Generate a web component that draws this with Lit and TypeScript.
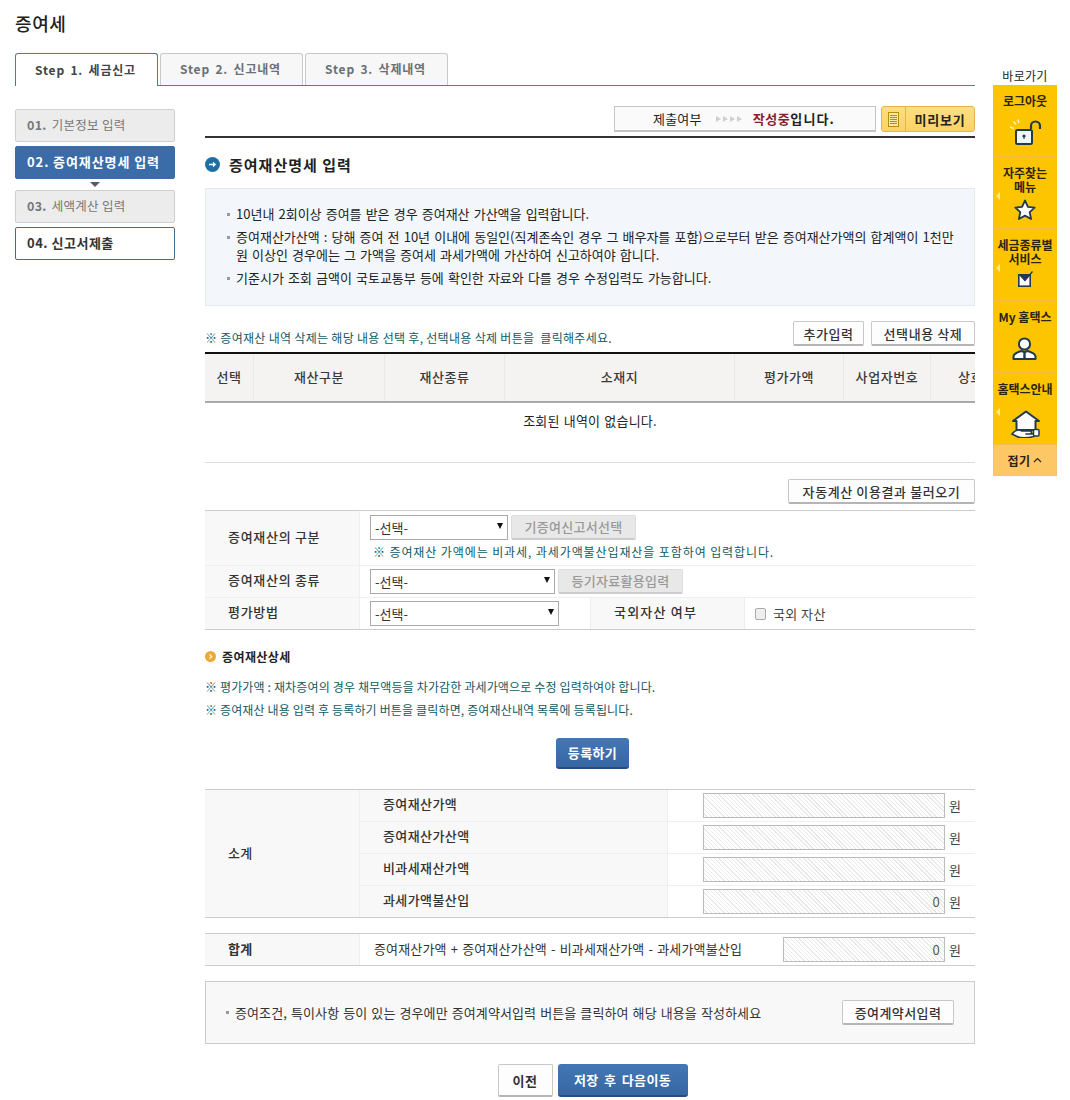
import { LitElement, html, css } from "lit";
import { customElement } from "lit/decorators.js";

const FONT = css`"Noto Sans CJK KR", "Liberation Sans", sans-serif`;

@customElement("app-root")
export class AppRoot extends LitElement {
  static styles = css`
    :host { display: block; width: 1070px; height: 1100px; overflow: hidden; background: #fff; color: #222; font-family: ${FONT}; font-size: 13px; letter-spacing: .4px; }
    * { box-sizing: border-box; }
    .page { display: flex; padding-left: 15px; gap: 18px; align-items: flex-start; }
    .main { width: 960px; flex: none; }
    h1 { margin: 0; height: 53px; padding-top: 12px; font-size: 18px; letter-spacing: .6px; line-height: 22px; font-weight: 500; color: #222; }
    .tabs { display: flex; gap: 2px; height: 33px; border-bottom: 1px solid #5b7d94; }
    .tab { width: 143px; height: 32px; border: 1px solid #c6c9cc; border-bottom: 0; border-radius: 3px 3px 0 0; background: #f7f7f7; color: #6a6f75; font-weight: 700; font-size: 12px; display: flex; align-items: center; justify-content: center; letter-spacing: .8px; word-spacing: 2px; padding: 0 2px 2px 0; }
    .tab.on { height: 33px; background: #fff; color: #3f4448; border-color: #4f7b96; }
    .cols { display: flex; gap: 30px; }
    .nav { width: 160px; flex: none; padding-top: 23px; display: flex; flex-direction: column; }
    .step { height: 33px; border-radius: 2px; border: 1px solid #cfcfcf; background: #ececec; color: #777; padding: 0 0 2px 11px; display: flex; align-items: center; gap: 5px; font-size: 12.5px; letter-spacing: .3px; }
    .step b { font-weight: 700; }
    .step + .step { margin-top: 4px; }
    .step.cur { background: #3b6ca8; border-color: #3b6ca8; color: #fff; font-weight: 700; font-size: 13px; letter-spacing: .9px; white-space: nowrap; }
    .step.todo { background: #fff; border-color: #3f6f8f; color: #333; font-weight: 700; font-size: 13px; letter-spacing: .5px; }
    .arrow { height: 11px; display: flex; justify-content: center; padding-top: 3px; }
    .arrow i { width: 0; height: 0; border: 5px solid transparent; border-top: 5px solid #5a5a5a; border-bottom: 0; }
    .arrow + .step { margin-top: 0; }
    .content { width: 770px; flex: none; }
    .status-row { display: flex; justify-content: flex-end; gap: 5px; margin-top: 20px; border-bottom: 2px solid #333; padding-bottom: 4px; height: 32px; }
    .status { width: 262px; height: 26px; border: 1px solid #c4c4c4; border-width: 1px 1px 2px 1px; background: #fafafa; display: flex; align-items: center; font-size: 13px; letter-spacing: .2px; padding-left: 38px; white-space: nowrap; }
    .status .ar { display: flex; gap: 2px; margin: 0 11px 0 14px; }
    .status .ar i { width: 0; height: 0; border: 3px solid transparent; border-left: 5px solid #cfcfcf; border-right: 0; }
    .status .w { font-weight: 700; color: #8d1b2e; letter-spacing: .6px; }
    .status b { color: #222; font-weight: 700; letter-spacing: 1.1px; }
    .preview { width: 94px; height: 26px; border: 1px solid #e3b54a; border-radius: 3px; background: linear-gradient(#fdde84, #fcd264); display: flex; align-items: center; font-weight: 700; font-size: 13px; color: #222; }
    .preview .ic { width: 24px; height: 100%; display: flex; align-items: center; justify-content: center; border-right: 1px solid #e3b54a; }
    .preview .t { flex: 1; text-align: center; letter-spacing: .8px; }
    h2 { margin: 0; height: 50px; display: flex; align-items: center; gap: 9px; font-size: 15px; letter-spacing: 1px; font-weight: 700; color: #222; padding-top: 3px; }
    .info { height: 118px; background: #f3f6fb; border: 1px solid #e5e8ec; padding: 16px 8px 0 20px; font-size: 13px; letter-spacing: 0; word-spacing: 1.2px; line-height: 18px; color: #222; white-space: nowrap; }
    .info .li { position: relative; padding-left: 10px; margin-bottom: 5px; }
    .info .li::before, .cond .d { content: ""; position: absolute; left: 1px; top: 8px; width: 3px; height: 3px; background: #999; }
    .noterow { height: 46px; display: flex; justify-content: space-between; align-items: flex-end; padding-bottom: 6px; }
    .noterow .note { margin-bottom: -1px; letter-spacing: .3px; }
    .note { color: #0f5a63; font-size: 12px; letter-spacing: .15px; line-height: 18px; white-space: nowrap; }
    .btn { height: 25px; padding: 0 10px; border: 1px solid #c8c8c8; border-bottom: 2px solid #b5b5b5; border-radius: 2px; background: #fdfdfd; font-size: 13px; letter-spacing: .6px; font-weight: 500; color: #333; display: inline-flex; align-items: center; justify-content: center; font-family: inherit; white-space: nowrap; }
    .btns { display: flex; gap: 7px; }
    .grid { border-top: 2px solid #111; height: 111px; border-bottom: 1px solid #ddd; overflow: hidden; }
    .ghead { display: grid; grid-template-columns: 49px 131px 120px 230px 109px 87px 80px; width: 806px; height: 49px; background: #f4f3f2; border-bottom: 2px solid #aaa; }
    .ghead span { display: flex; align-items: center; justify-content: center; font-weight: 500; color: #3a3a3a; border-right: 1px solid #e8e8e8; font-size: 13px; letter-spacing: .6px; white-space: nowrap; padding-bottom: 2px; }
    .empty { text-align: center; line-height: 18px; padding-top: 9px; font-size: 13px; letter-spacing: .2px; word-spacing: 1px; color: #222; }
    .autorow { display: flex; justify-content: flex-end; padding-top: 16px; height: 47px; }
    .form { border-top: 1px solid #ccc; border-bottom: 1px solid #ccc; }
    .row { display: flex; border-bottom: 1px solid #efefef; align-items: stretch; }
    .row:last-child { border-bottom: 0; }
    .th { width: 155px; flex: none; background: #f8f8f8; border-right: 1px solid #eee; padding: 0 0 4px 23px; font-weight: 500; color: #333; display: flex; align-items: center; letter-spacing: .7px; white-space: nowrap; }
    .td { padding-left: 10px; display: flex; flex-direction: column; justify-content: center; flex: 1; }
    .line { display: flex; gap: 3px; align-items: center; }
    .sel { height: 25px; border: 1px solid #aaa; background: #fff; padding-left: 4px; display: flex; align-items: center; justify-content: space-between; padding-right: 4px; font-size: 13px; letter-spacing: 0; color: #333; }
    .sel i { width: 0; height: 0; border: 3.5px solid transparent; border-top: 6px solid #111; border-bottom: 0; margin-top: -3px; }
    .dis { height: 25px; width: 125px; background: #e8e8e8; border: 1px solid #ddd; border-bottom: 2px solid #ccc; color: #999; font-weight: 500; letter-spacing: .3px; display: flex; align-items: center; justify-content: center; border-radius: 2px; white-space: nowrap; padding-bottom: 2px; }
    .r1 { height: 55px; } .r2 { height: 32px; } .r3 { height: 31px; }
    .r1 .note { padding-left: 3px; margin-top: 3px; letter-spacing: .9px; }
    .s1 { width: 138px; } .s2 { width: 185px; } .s3 { width: 189px; }
    .r3 .th2 { width: 155px; flex: none; background: #f8f8f8; border: solid #eee; border-width: 0 1px; font-weight: 500; display: flex; align-items: center; padding: 0 0 4px 23px; letter-spacing: 1.2px; color: #333; white-space: nowrap; }
    .r3 .tdsel { width: 230px; flex: none; padding-left: 10px; display: flex; align-items: center; }
    .chk { display: flex; align-items: center; gap: 7px; padding-left: 10px; color: #444; }
    .chk i { width: 11px; height: 12px; border: 1px solid #aaa; border-radius: 2px; background: #eee; }
    h3 { margin: 0; height: 48px; display: flex; align-items: center; gap: 6px; font-size: 12px; letter-spacing: .4px; font-weight: 700; color: #222; padding-top: 4px; }
    .notes { display: flex; flex-direction: column; gap: 5px; }
    .center { display: flex; justify-content: center; gap: 5px; padding-left: 5px; }
    .reg { margin-top: 19px; height: 51px; }
    .primary { height: 31px; border: 0; border-bottom: 2px solid #274f7e; border-radius: 3px; background: linear-gradient(#4377b5, #3767a3); color: #fff; font-weight: 700; font-size: 13px; display: inline-flex; align-items: center; justify-content: center; word-spacing: 2px; }
    .reg .primary { width: 73px; }
    .sum { border-top: 1px solid #ccc; border-bottom: 1px solid #ccc; display: flex; }
    .sum .lab { width: 155px; flex: none; background: #f8f8f8; padding: 0 0 2px 23px; font-weight: 500; display: flex; align-items: center; color: #333; border-right: 1px solid #eee; }
    .sum .rows { flex: 1; }
    .srow { display: flex; height: 32px; border-bottom: 1px solid #efefef; }
    .srow:last-child { border-bottom: 0; height: 31px; }
    .srow .n { width: 308px; flex: none; background: #f8f8f8; border-right: 1px solid #eee; padding: 0 0 4px 23px; display: flex; align-items: center; font-weight: 500; color: #333; }
    .srow .v { flex: 1; display: flex; align-items: center; padding-left: 35px; gap: 4px; color: #444; }
    .hatch { height: 25px; border: 1px solid #bbb; background: repeating-linear-gradient(45deg, #fff, #fff 2px, #e9e9e9 2px, #e9e9e9 3px); text-align: right; padding-right: 4px; line-height: 23px; color: #555; flex: none; }
    .total { margin-top: 15px; height: 33px; border-top: 1px solid #ccc; border-bottom: 1px solid #ccc; display: flex; }
    .total .lab { width: 155px; flex: none; background: #f8f8f8; padding: 0 0 2px 23px; font-weight: 700; display: flex; align-items: center; border-right: 1px solid #eee; color: #333; }
    .total .f { width: 423px; flex: none; padding: 0 0 2px 14px; display: flex; align-items: center; color: #333; white-space: nowrap; letter-spacing: .15px; word-spacing: 1px; }
    .total .v { display: flex; align-items: center; gap: 4px; color: #444; }
    .cond { position: relative; margin-top: 15px; height: 63px; border: 1px solid #ccc; background: #f8f8f8; display: flex; align-items: center; justify-content: space-between; padding: 0 20px 0 29px; color: #333; letter-spacing: .1px; word-spacing: 1px; white-space: nowrap; }
    .cond .d { left: 20px; top: 29px; }
    .cond .btn { width: 112px; padding: 0; letter-spacing: .4px; }
    .bottom { margin-top: 20px; }
    .bottom .btn { width: 55px; height: 33px; font-weight: 700; }
    .bottom .primary { width: 130px; height: 33px; }
    .quick { width: 64px; flex: none; margin-top: 68px; }
    .qt { height: 17px; text-align: center; font-size: 12px; letter-spacing: .3px; line-height: 15px; color: #222; white-space: nowrap; }
    .qi { position: relative; height: 72px; background: #fdc400; border-bottom: 1px solid #eec04a; display: flex; flex-direction: column; align-items: center; padding-top: 9px; font-size: 12px; letter-spacing: 0; font-weight: 700; line-height: 14px; text-align: center; color: #2c2410; white-space: nowrap; }
    .qi svg { position: absolute; left: 50%; transform: translateX(-50%); }
    .qi.arr::before { content: ""; position: absolute; left: 3px; top: 35px; border: 4px solid transparent; border-right: 4px solid #fff28a; border-left: 0; }
    .i-lock { bottom: 8px; } .i-star { bottom: 7px; } .i-check { bottom: 12px; } .i-user { bottom: 12px; } .i-home { bottom: 6px; }
    .qf { height: 31px; background: #fdc766; display: flex; align-items: center; justify-content: center; font-size: 12px; font-weight: 700; color: #2c2410; gap: 3px; border: 1px solid #eec577; border-top: 0; }
  `;

  private won(v: string, w: number) {
    return html`<div class="hatch" style="width:${w}px">${v}</div>원`;
  }

  render() {
    return html`
      <div class="page">
        <div class="main">
          <h1>증여세</h1>
          <div class="tabs">
            <div class="tab on">Step 1. 세금신고</div>
            <div class="tab">Step 2. 신고내역</div>
            <div class="tab">Step 3. 삭제내역</div>
          </div>
          <div class="cols">
            <div class="nav">
              <div class="step"><b>01.</b> 기본정보 입력</div>
              <div class="step cur">02. 증여재산명세 입력</div>
              <div class="arrow"><i></i></div>
              <div class="step"><b>03.</b> 세액계산 입력</div>
              <div class="step todo">04. 신고서제출</div>
            </div>
            <div class="content">
              <div class="status-row">
                <div class="status">제출여부<span class="ar"><i></i><i></i><i></i><i></i></span><span class="w">작성중</span><b>입니다.</b></div>
                <div class="preview">
                  <span class="ic"><svg width="11" height="15" viewBox="0 0 11 15"><rect x=".5" y=".5" width="10" height="14" fill="#fbe9a8" stroke="#b98a10"/><path d="M2 3.5h7M2 5.5h7M2 7.5h7M2 9.5h7M2 11.5h7" stroke="#b98a10"/></svg></span>
                  <span class="t">미리보기</span>
                </div>
              </div>
              <h2>
                <svg width="15" height="15" viewBox="0 0 15 15"><circle cx="7.5" cy="7.5" r="7.5" fill="#1f6fa5"/><path d="M4 7.5h6M8 5.5l2.2 2-2.2 2" stroke="#fff" stroke-width="1.3" fill="none"/></svg>
                증여재산명세 입력
              </h2>
              <div class="info">
                <div class="li">10년내 2회이상 증여를 받은 경우 증여재산 가산액을 입력합니다.</div>
                <div class="li">증여재산가산액 : 당해 증여 전 10년 이내에 동일인(직계존속인 경우 그 배우자를 포함)으로부터 받은 증여재산가액의 합계액이 1천만<br />원 이상인 경우에는 그 가액을 증여세 과세가액에 가산하여 신고하여야 합니다.</div>
                <div class="li">기준시가 조회 금액이 국토교통부 등에 확인한 자료와 다를 경우 수정입력도 가능합니다.</div>
              </div>
              <div class="noterow">
                <div class="note">※ 증여재산 내역 삭제는 해당 내용 선택 후, 선택내용 삭제 버튼을 &nbsp;클릭해주세요.</div>
                <div class="btns"><span class="btn" style="width:71px">추가입력</span><span class="btn" style="width:104px">선택내용 삭제</span></div>
              </div>
              <div class="grid">
                <div class="ghead">
                  <span>선택</span><span>재산구분</span><span>재산종류</span><span>소재지</span><span>평가가액</span><span>사업자번호</span><span>상호</span>
                </div>
                <div class="empty">조회된 내역이 없습니다.</div>
              </div>
              <div class="autorow"><span class="btn" style="width:187px;padding:0">자동계산 이용결과 불러오기</span></div>
              <div class="form">
                <div class="row r1">
                  <div class="th">증여재산의 구분</div>
                  <div class="td">
                    <div class="line"><div class="sel s1">-선택-<i></i></div><div class="dis">기증여신고서선택</div></div>
                    <div class="note">※ 증여재산 가액에는 비과세, 과세가액불산입재산을 포함하여 입력합니다.</div>
                  </div>
                </div>
                <div class="row r2">
                  <div class="th">증여재산의 종류</div>
                  <div class="td"><div class="line"><div class="sel s2">-선택-<i></i></div><div class="dis">등기자료활용입력</div></div></div>
                </div>
                <div class="row r3">
                  <div class="th">평가방법</div>
                  <div class="tdsel"><div class="sel s3">-선택-<i></i></div></div>
                  <div class="th2">국외자산 여부</div>
                  <div class="chk"><i></i>국외 자산</div>
                </div>
              </div>
              <h3>
                <svg width="11" height="11" viewBox="0 0 11 11"><circle cx="5.5" cy="5.5" r="5.5" fill="#eda83a"/><path d="M4.5 3.3l2.2 2.2-2.2 2.2" stroke="#fff" stroke-width="1.2" fill="none"/></svg>
                증여재산상세
              </h3>
              <div class="notes">
                <div class="note">※ 평가가액 : 재차증여의 경우 채무액등을 차가감한 과세가액으로 수정 입력하여야 합니다.</div>
                <div class="note">※ 증여재산 내용 입력 후 등록하기 버튼을 클릭하면, 증여재산내역 목록에 등록됩니다.</div>
              </div>
              <div class="center reg"><span class="primary">등록하기</span></div>
              <div class="sum">
                <div class="lab">소계</div>
                <div class="rows">
                  <div class="srow"><div class="n">증여재산가액</div><div class="v">${this.won("", 242)}</div></div>
                  <div class="srow"><div class="n">증여재산가산액</div><div class="v">${this.won("", 242)}</div></div>
                  <div class="srow"><div class="n">비과세재산가액</div><div class="v">${this.won("", 242)}</div></div>
                  <div class="srow"><div class="n">과세가액불산입</div><div class="v">${this.won("0", 242)}</div></div>
                </div>
              </div>
              <div class="total">
                <div class="lab">합계</div>
                <div class="f">증여재산가액 + 증여재산가산액 - 비과세재산가액 - 과세가액불산입</div>
                <div class="v">${this.won("0", 162)}</div>
              </div>
              <div class="cond">
                <span class="d"></span>
                <span>증여조건, 특이사항 등이 있는 경우에만 증여계약서입력 버튼을 클릭하여 해당 내용을 작성하세요</span>
                <span class="btn">증여계약서입력</span>
              </div>
              <div class="center bottom">
                <span class="btn">이전</span>
                <span class="primary">저장 후 다음이동</span>
              </div>
            </div>
          </div>
        </div>
        <div class="quick">
          <div class="qt">바로가기</div>
          <div class="qi">로그아웃
            <svg class="i-lock" width="34" height="30" viewBox="0 0 34 30"><path d="M2 9l4 1.5M5.5 3.5l2.5 3M10 1.5l.8 3.5" stroke="#fff6c0" stroke-width="1.5"/><path d="M23 11V8a4.5 4.5 0 0 1 9 0v3" fill="none" stroke="#1f3b4d" stroke-width="2.2"/><rect x="8" y="12" width="16" height="14" rx="1.5" fill="#eef6f6" stroke="#1f3b4d" stroke-width="2"/><circle cx="16" cy="18" r="1.6" fill="#1f3b4d"/><path d="M16 18v3" stroke="#1f3b4d"/></svg>
          </div>
          <div class="qi arr">자주찾는<br />메뉴
            <svg class="i-star" width="22" height="22" viewBox="0 0 22 22"><path d="M11 1.5l2.9 6.3 6.8.8-5 4.6 1.4 6.8-6.1-3.4-6.1 3.4 1.4-6.8-5-4.6 6.8-.8z" fill="#fff" stroke="#1f3b4d" stroke-width="1.8" stroke-linejoin="round"/></svg>
          </div>
          <div class="qi arr">세금종류별<br />서비스
            <svg class="i-check" width="18" height="18" viewBox="0 0 18 18"><rect x="2.8" y="4.8" width="11.4" height="11.4" fill="#fff" stroke="#1f3b4d" stroke-width="1.6"/><path d="M3 5h11l-5.5 6z" fill="#1f3b4d"/><path d="M8.5 11L16.5 1.5" stroke="#1f3b4d" stroke-width="1.3"/></svg>
          </div>
          <div class="qi">My 홈택스
            <svg class="i-user" width="28" height="26" viewBox="0 0 28 26"><circle cx="13.5" cy="10" r="5.6" fill="#fff" stroke="#1f3b4d" stroke-width="2"/><path d="M2.500 25v-2.500c0-3 4.500-4.500 7.500-5.500l3.500 1 3.500-1c3 1 7.500 2.500 7.500 5.500V25z" fill="#fff" stroke="#1f3b4d" stroke-width="2" stroke-linejoin="round"/><path d="M13.500 18v7" stroke="#1f3b4d" stroke-width="2.400"/></svg>
          </div>
          <div class="qi arr">홈택스안내
            <svg class="i-home" width="32" height="28" viewBox="0 0 32 28"><path d="M17 1.500L4 11h3.500v9h19v-9H30z" fill="#fff" stroke="#1f3b4d" stroke-width="2" stroke-linejoin="round"/><path d="M3 24c3-4 7-5 10-3h8c2 0 2 3 0 3h-4 8v2.500C18 28 11 28 8 26.500z" fill="#fff" stroke="#1f3b4d" stroke-width="1.700" stroke-linejoin="round"/><rect x="24.500" y="19.500" width="5.500" height="6.500" rx="1" fill="#fff" stroke="#1f3b4d" stroke-width="1.500"/></svg>
          </div>
          <div class="qf">접기<svg width="9" height="6" viewBox="0 0 9 6"><path d="M1 5l3.500-3.500L8 5" fill="none" stroke="#2c2410" stroke-width="1.200"/></svg></div>
        </div>
      </div>
    `;
  }
}
